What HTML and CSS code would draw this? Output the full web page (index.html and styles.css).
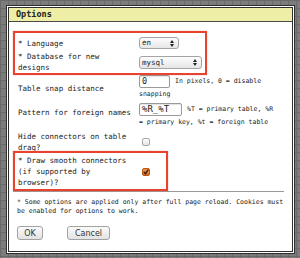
FILE: index.html
```html
<!DOCTYPE html>
<html lang="en">
<head>
  <meta charset="UTF-8" />
  <title>Options</title>
  <link rel="stylesheet" href="styles.css">
</head>
<body>
  <div class="dialog">
    <div class="dialog-inner">
      <div class="titlebar">Options</div>

      <div class="dialog-body">
        <table class="options">
          <tr>
            <td class="label">* Language</td>
            <td class="value">
              <div class="select sel-en">en
                <svg class="arrows" width="4" height="7" viewBox="0 0 4 7"><path d="M0 3 L2 0 L4 3 Z M0 4 L4 4 L2 7 Z" fill="#222"/></svg>
              </div>
            </td>
          </tr>
          <tr>
            <td class="label">* Database for new designs</td>
            <td class="value">
              <div class="select sel-db">mysql
                <svg class="arrows" width="4" height="7" viewBox="0 0 4 7"><path d="M0 3 L2 0 L4 3 Z M0 4 L4 4 L2 7 Z" fill="#222"/></svg>
              </div>
            </td>
          </tr>
          <tr>
            <td class="label">Table snap distance</td>
            <td class="value help">
              <div class="help-row"><span class="input in-snap">0</span><span>In pixels, 0 = disable</span></div>
              <div>snapping</div>
            </td>
          </tr>
          <tr>
            <td class="label raised">Pattern for foreign names</td>
            <td class="value help">
              <div class="help-row"><span class="input in-pattern">%R_%T</span><span>%T = primary table, %R</span></div>
              <div>= primary key, %t = foreign table</div>
            </td>
          </tr>
          <tr>
            <td class="label">Hide connectors on table drag?</td>
            <td class="value"><span class="check"></span></td>
          </tr>
          <tr>
            <td class="label">* Draw smooth connectors (if supported by browser)?</td>
            <td class="value">
              <span class="check checked">
                <svg width="8" height="8" viewBox="0 0 8 8"><path d="M2 4 L3.5 5.8 L6.2 1.5" stroke="#3a2010" stroke-width="1.4" fill="none"/></svg>
              </span>
            </td>
          </tr>
        </table>

        <div class="rule"></div>

        <p class="note">* Some options are applied only after full page reload. Cookies must be enabled for options to work.</p>

        <div class="actions">
          <button class="btn">OK</button>
          <button class="btn cancel">Cancel</button>
        </div>
      </div>

      <!-- annotation boxes -->
      <div class="mark mark-top"></div>
      <div class="mark mark-bottom"></div>
    </div>
  </div>
</body>
</html>
```

FILE: styles.css
```css
body {
  margin: 0;
  width: 300px;
  height: 258px;
  overflow: hidden;
  background-color: #7c7c7c;
  background-image:
    linear-gradient(#6a6a6a 1px, transparent 1px),
    linear-gradient(90deg, #6a6a6a 1px, transparent 1px);
  background-size: 8px 8px;
  font-family: "DejaVu Sans Mono", monospace;
  color: #222;
}

.dialog {
  margin: 5px 0 0 6px;
  width: 289px;
  height: 249px;
  box-sizing: border-box;
  border: 1px solid #2e2e2e;
  padding: 1px;
  background: #fff;
}

.dialog-inner {
  position: relative;
  height: 100%;
  box-sizing: border-box;
  border: 1px solid #2e2e2e;
}

.titlebar {
  height: 13px;
  line-height: 13px;
  padding-left: 7px;
  background: #eeeea6;
  border-bottom: 1px solid #4a4a4a;
  font-size: 8.5px;
  font-weight: bold;
}

.dialog-body {
  padding: 14px 0 0 7px;
}

.options {
  border-collapse: collapse;
  font-size: 7.5px;
  line-height: 11px;
}

.options td {
  padding: 1px 2px;
  vertical-align: middle;
}

.options .label {
  width: 115px;
}

.options .label.raised {
  vertical-align: top;
  padding-top: 5px;
}

.options .value {
  width: 139px;
  padding-left: 4px;
}

.options .help {
  font-size: 6.5px;
  line-height: 13px;
}

.help-row {
  display: flex;
  align-items: center;
  gap: 5px;
}

.select {
  position: relative;
  height: 12px;
  box-sizing: border-box;
  border: 1px solid #a4a4a4;
  border-radius: 3px;
  background: linear-gradient(#fdfdfd, #e6e6e6);
  padding-left: 2px;
  font-size: 7.5px;
  line-height: 10px;
}

.sel-en {
  width: 40px;
}

.sel-db {
  width: 63px;
  height: 13px;
  line-height: 11px;
}

.arrows {
  position: absolute;
  right: 4px;
  top: 50%;
  margin-top: -3.5px;
}

.input {
  height: 13px;
  box-sizing: border-box;
  border: 1px solid #9a9a9a;
  border-radius: 2px;
  padding-left: 2px;
  font-size: 8.5px;
  line-height: 11px;
  box-shadow: inset 0 1px 1px rgba(0, 0, 0, 0.12);
}

.in-snap {
  width: 31px;
}

.in-pattern {
  width: 43px;
  font-size: 9px;
}

.check {
  display: block;
  width: 8px;
  height: 8px;
  margin-left: 3px;
  box-sizing: border-box;
  border: 1px solid #a8a8a8;
  border-radius: 2px;
  background: linear-gradient(#fff, #e4e4e4);
}

.check.checked {
  border-color: #b85818;
  background: linear-gradient(#f2924a, #e06a22);
  position: relative;
}

.check svg {
  position: absolute;
  left: -1px;
  top: -1px;
}

.rule {
  margin: 2px 8px 0 -3px;
  border-top: 1px solid #9a9a9a;
}

.note {
  margin: 6px 0 0 1px;
  font-size: 6.5px;
  line-height: 9px;
}

.actions {
  display: flex;
  gap: 24px;
  margin: 10px 0 0 1px;
}

.btn {
  height: 14px;
  padding: 0;
  border: 1px solid #a2a2a2;
  border-radius: 3px;
  background: linear-gradient(#fbfbfb, #e2e2e2);
  font-family: "DejaVu Sans", sans-serif;
  font-size: 8px;
  color: #333;
  width: 26px;
}

.btn.cancel {
  width: 43px;
}

.mark {
  position: absolute;
  border: 2px solid #e8432e;
  box-shadow: 0 0 1px rgba(232, 67, 46, 0.6);
}

.mark-top {
  left: 4px;
  top: 23px;
  width: 190px;
  height: 40px;
}

.mark-bottom {
  left: 4px;
  top: 143px;
  width: 151px;
  height: 36px;
}
```
